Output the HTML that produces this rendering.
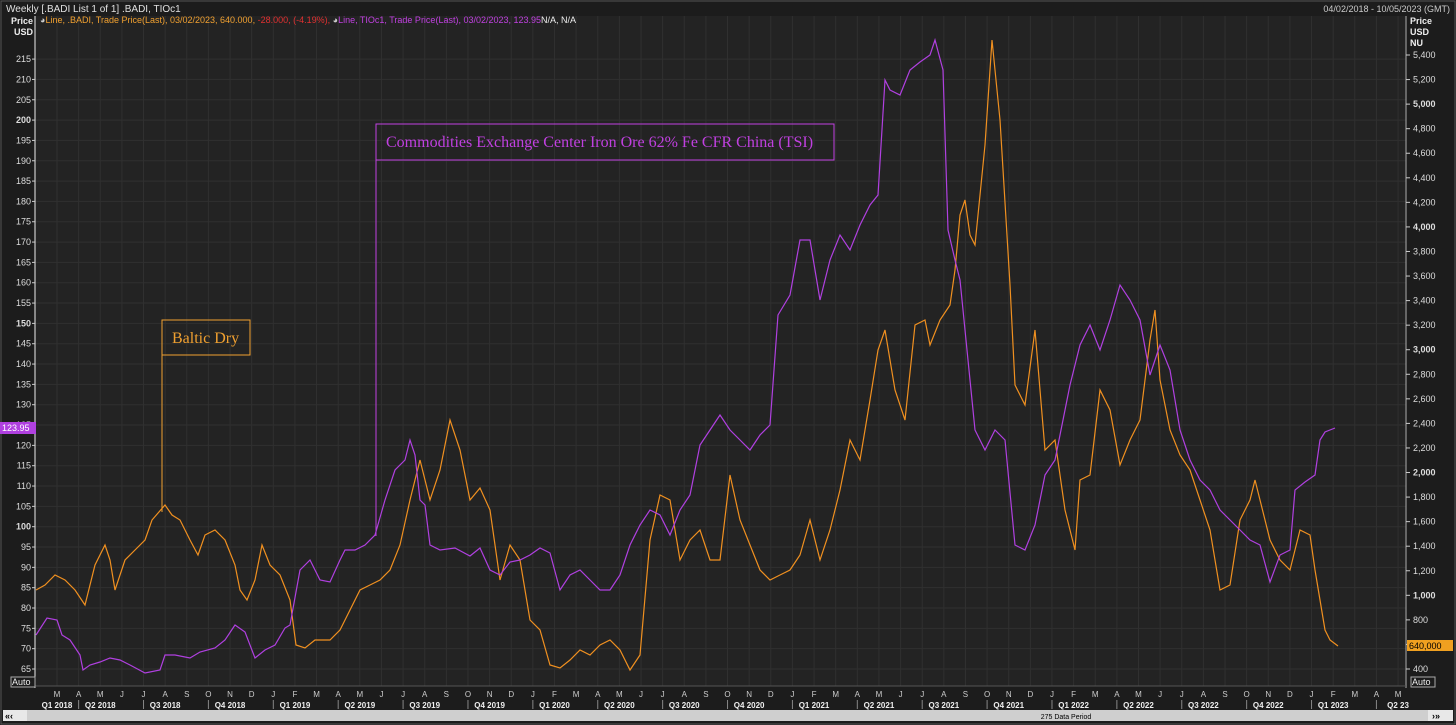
<!DOCTYPE html>
<html><head><meta charset="utf-8"><style>
body{margin:0;background:#1b1b1b;width:1456px;height:725px;overflow:hidden;font-family:"Liberation Sans",sans-serif}
</style></head><body>
<svg id="s" width="1456" height="725" xmlns="http://www.w3.org/2000/svg" style="position:absolute;left:0;top:0;font-family:'Liberation Sans',sans-serif">
<rect x="0" y="0" width="1456" height="725" fill="#1c1c1c"/>
<rect x="1" y="1" width="1454" height="723" fill="none" stroke="#555"/>
<text x="6" y="12" fill="#e0e0e0" font-size="10">Weekly [.BADI List 1 of 1] .BADI, TIOc1</text>
<text x="1450" y="12" fill="#ccc" font-size="9" text-anchor="end">04/02/2018 - 10/05/2023 (GMT)</text>
<rect x="35" y="16" width="1372" height="670" fill="#232323"/>
<g id="grid" stroke="#303030" stroke-width="1"></g>
<line x1="35" y1="16" x2="35" y2="688" stroke="#eee"/>
<line x1="1406" y1="16" x2="1406" y2="688" stroke="#aaa"/>
<line x1="35" y1="686" x2="1406" y2="686" stroke="#555"/>
<text y="23" font-size="9"><tspan x="40" fill="#ccc">◕</tspan><tspan fill="#f0a030">Line, .BADI, Trade Price(Last), 03/02/2023, 640.000, </tspan><tspan fill="#e03030">-28.000, (-4.19%), </tspan><tspan fill="#ccc">◕</tspan><tspan fill="#c040e0">Line, TIOc1, Trade Price(Last), 03/02/2023, 123.95</tspan><tspan fill="#eee">N/A, N/A</tspan></text>
<text x="33" y="24" fill="#eee" font-size="9" font-weight="bold" text-anchor="end">Price</text>
<text x="33" y="35" fill="#eee" font-size="9" font-weight="bold" text-anchor="end">USD</text>
<text x="1410" y="24" fill="#eee" font-size="9" font-weight="bold">Price</text>
<text x="1410" y="35" fill="#eee" font-size="9" font-weight="bold">USD</text>
<text x="1410" y="46" fill="#eee" font-size="9" font-weight="bold">NU</text>
<g id="lab"></g>
<!-- annotations -->
<line x1="162" y1="355" x2="162" y2="512" stroke="#f0a030"/>
<rect x="162" y="320" width="88" height="35" fill="none" stroke="#f0a030"/>
<text x="172" y="343" fill="#f0a030" font-size="16" font-family="Liberation Serif,serif">Baltic Dry</text>
<line x1="376" y1="160" x2="376" y2="536" stroke="#c040e0"/>
<rect x="376" y="124" width="458" height="36" fill="none" stroke="#c040e0"/>
<text x="386" y="147" fill="#c040e0" font-size="16" font-family="Liberation Serif,serif">Commodities Exchange Center Iron Ore 62% Fe CFR China (TSI)</text>
<polyline fill="none" stroke="#f09020" stroke-width="1.2" points="36,590 45,585 55,575 65,580 75,590 85,605 95,565 105,545 110,560 115,590 125,560 135,550 145,540 152,520 165,505 172,515 180,520 190,540 198,555 205,535 215,530 225,540 235,565 240,590 247,600 255,580 262,545 270,565 280,575 290,600 296,645 305,648 315,640 330,640 340,630 350,610 360,590 370,585 380,580 390,570 400,545 410,500 420,460 430,500 440,470 450,420 460,450 470,500 480,488 490,510 500,580 510,545 520,560 530,620 540,630 550,665 560,668 570,660 580,650 590,655 600,645 610,640 620,650 630,670 640,655 650,540 660,495 670,500 680,560 690,540 700,530 710,560 720,560 730,475 740,520 750,545 760,570 770,580 780,575 790,570 800,555 810,520 820,560 830,530 840,490 850,440 860,460 870,400 878,350 885,330 895,390 905,420 915,325 925,320 930,345 940,320 950,305 955,270 960,215 965,200 970,235 975,245 985,145 992,40 1000,120 1010,285 1015,385 1025,405 1035,330 1045,450 1055,440 1065,510 1075,550 1080,480 1090,475 1100,390 1110,410 1120,465 1130,440 1140,420 1150,340 1155,310 1160,380 1170,430 1180,455 1190,470 1200,500 1210,530 1220,590 1230,585 1240,520 1250,500 1255,480 1260,500 1270,540 1280,560 1290,570 1300,530 1310,535 1315,570 1325,630 1330,640 1338,646"/>
<polyline fill="none" stroke="#b040e0" stroke-width="1.2" points="36,635 47,618 57,620 62,635 70,640 80,655 83,670 90,665 100,662 110,658 120,660 130,665 145,673 160,670 165,655 175,655 190,658 200,652 215,648 225,640 235,625 245,632 255,658 265,650 275,645 285,628 290,625 300,570 310,560 320,580 330,582 340,560 345,550 355,550 365,545 375,535 385,500 395,470 405,460 410,440 415,455 420,500 425,505 430,545 440,550 455,548 470,556 480,548 490,570 500,575 510,562 520,560 530,555 540,548 550,553 560,590 570,575 580,570 590,580 600,590 610,590 620,575 630,545 640,525 650,510 660,515 670,535 680,510 690,495 700,445 710,430 720,415 730,430 740,440 750,450 760,435 770,425 778,315 790,295 800,240 810,240 820,300 830,260 840,235 850,250 860,225 870,205 878,195 885,80 890,90 900,95 910,70 920,62 930,55 935,40 943,70 948,230 955,260 960,280 965,330 975,430 985,450 995,430 1005,440 1015,545 1025,550 1035,525 1045,475 1055,460 1065,410 1070,385 1080,345 1090,325 1100,350 1110,320 1120,285 1130,300 1140,320 1150,375 1160,345 1170,370 1180,430 1190,460 1200,480 1210,490 1220,510 1230,520 1240,530 1250,540 1260,545 1270,582 1280,555 1290,550 1295,490 1305,482 1315,475 1320,440 1325,432 1335,428"/>
<rect x="0" y="422" width="36" height="12" fill="#b040e0"/>
<text x="2" y="431" fill="#fff" font-size="9">123.95</text>
<rect x="1407" y="640" width="46" height="11" fill="#f0a020"/>
<text x="1409" y="649" fill="#000" font-size="9">640,000</text>
<rect x="11" y="677" width="24" height="10" fill="none" stroke="#aaa"/>
<text x="12" y="685" fill="#eee" font-size="9">Auto</text>
<rect x="1411" y="677" width="24" height="10" fill="none" stroke="#aaa"/>
<text x="1412" y="685" fill="#eee" font-size="9">Auto</text>
<rect x="3" y="710" width="1450" height="11" fill="#cfcfcf"/>
<rect x="3" y="710" width="24" height="11" fill="#e8e8e8"/>
<rect x="1428" y="710" width="25" height="11" fill="#e8e8e8"/>
<text x="5" y="719" fill="#000" font-size="9" font-weight="bold">«‹</text>
<text x="1432" y="719" fill="#000" font-size="9" font-weight="bold">›»</text>
<text x="1066" y="719" fill="#000" font-size="7" text-anchor="middle">275 Data Period</text>
</svg>
<script>
var ns="http://www.w3.org/2000/svg",g=document.getElementById('grid'),L=document.getElementById('lab');
function el(p,t,a,txt){var e=document.createElementNS(ns,t);for(var k in a)e.setAttribute(k,a[k]);if(txt)e.textContent=txt;p.appendChild(e);return e;}
for(var v=65;v<=215;v+=5){var y=669-(v-65)/5*20.33;el(g,'line',{x1:35,x2:1406,y1:y,y2:y});el(L,'text',{x:31,y:y+3,fill:'#ddd','font-size':9,'text-anchor':'end','font-weight':v%50==0?'bold':'normal'},''+v);el(L,'line',{x1:32,x2:35,y1:y,y2:y,stroke:'#ccc'});}
for(var v=400;v<=5400;v+=200){var y=669-(v-400)/200*24.56;var s=v>=1000?(Math.floor(v/1000)+','+('00'+v%1000).slice(-3)):''+v;el(L,'text',{x:1413,y:y+3,fill:'#ddd','font-size':9,'font-weight':v%1000==0?'bold':'normal'},s);el(L,'line',{x1:1406,x2:1410,y1:y,y2:y,stroke:'#ccc'});}
var mn='JFMAMJJASOND';
for(var i=0;i<=62;i++){var x=57+i*21.63,m=(i+2)%12,yr=2018+Math.floor((i+2)/12);el(g,'line',{x1:x,x2:x,y1:16,y2:686});el(L,'text',{x:x,y:697,fill:'#ccc','font-size':8,'text-anchor':'middle'},mn[m]);
if(m%3==0){el(L,'line',{x1:x,x2:x,y1:700,y2:709,stroke:'#888'});}
if(m%3==1){var q=(m-1)/3+1;el(L,'text',{x:x,y:708,fill:'#eee','font-size':8,'font-weight':'bold','text-anchor':'middle'},(yr==2023&&q==2)?'Q2 23':'Q'+q+' '+yr);}}
el(L,'text',{x:57,y:708,fill:'#eee','font-size':8,'font-weight':'bold','text-anchor':'middle'},'Q1 2018');
</script>
</body></html>
